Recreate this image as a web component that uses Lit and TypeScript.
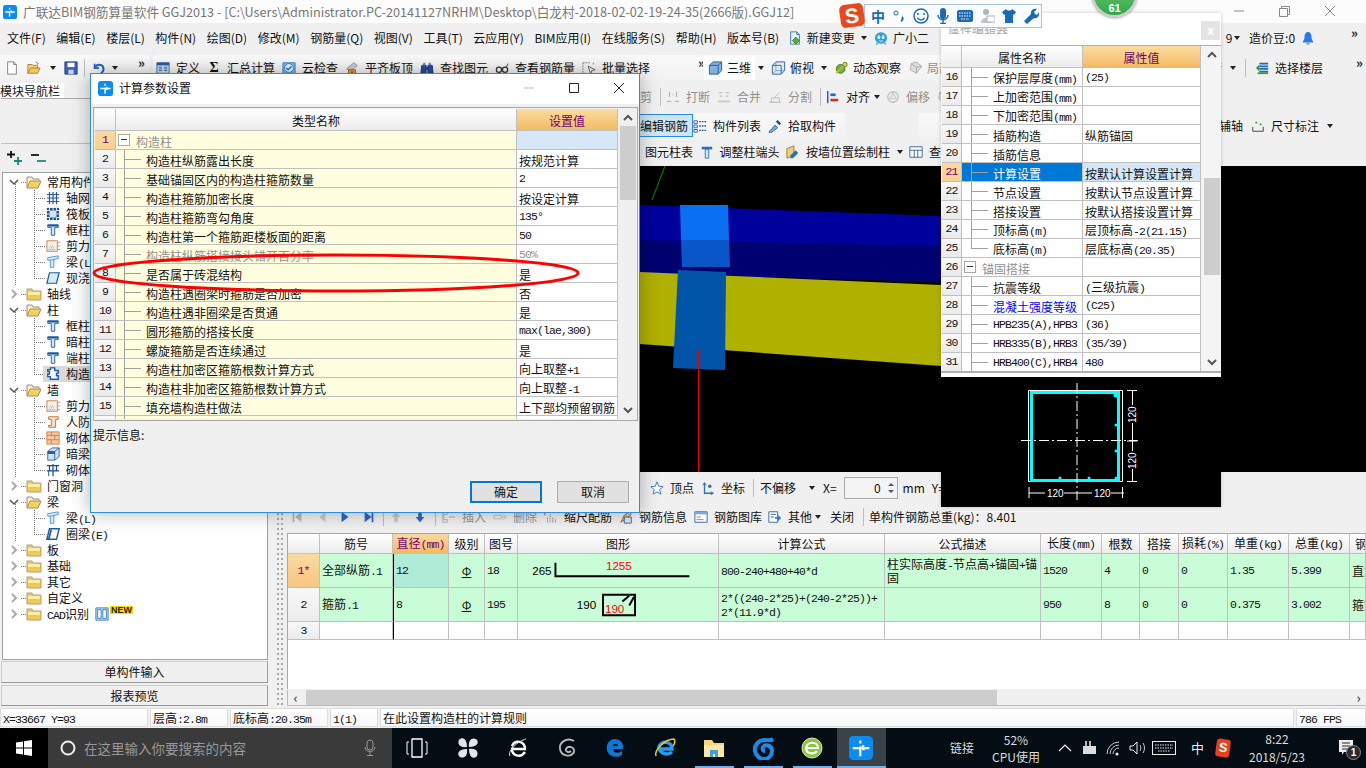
import { LitElement, html, css, svg } from 'lit'
import { customElement } from 'lit/decorators.js'

// split latin runs out so they get the narrow half-width look of the app's table font
const T = (s: string) =>
  html`<span class="tx ${/^[\x20-\x7e°]+$/.test(s) ? 'solo' : ''}">${s
    .split(/([\x20-\x7e°]+)/)
    .map((p, i) => (i % 2 ? html`<span class="l">${p}</span>` : p))}</span>`

const ICONS: Record<string, any> = {
  doc: svg`<path d="M3 1h7l3 3v11H3z" fill="#fff" stroke="#777"/><path d="M10 1v3h3" fill="#ddd" stroke="#777"/>`,
  open: svg`<path d="M1 14V4h5l1 1h5v3" fill="#f3d27a" stroke="#a07a30"/><path d="M1 14l3-6h11l-3 6z" fill="#f7c95a" stroke="#a07a30"/><path d="M10 1l3 2-1 1" fill="none" stroke="#2a6fc0"/>`,
  save: svg`<path d="M1 1h14v14H1z" fill="#3a5fc0" stroke="#223a80"/><path d="M4 2h8v5H4z" fill="#fff"/><path d="M5 10h6v5H5z" fill="#c8d4ee"/>`,
  undo: svg`<path d="M3 3v5h5" fill="none" stroke="#2a66c8" stroke-width="2"/><path d="M3 8c2-5 9-5 10 0 .5 3-1 5-3 6" fill="none" stroke="#2a66c8" stroke-width="2.4"/>`,
  def: svg`<path d="M1 2h14v12H1z" fill="#dbe7f6" stroke="#2a5a9c"/><path d="M1 2h14v3H1z" fill="#2a5a9c"/><path d="M3 7h4M3 9h4M3 11h4M9 7h4M9 9h4M9 11h4" stroke="#2a5a9c"/>`,
  check: svg`<path d="M1 2h14v12H1z" fill="#7fb5ea" stroke="#3a7fc8"/><circle cx="8" cy="8" r="5" fill="#eaf4ff" stroke="#3a7fc8"/><path d="M5 8l2 2 4-4" fill="none" stroke="#2a6fc0" stroke-width="1.5"/>`,
  slab: svg`<path d="M2 9l8-7 4 3-8 7z" fill="#c9cdd4" stroke="#8a8f98"/><path d="M4 10h8v5H4z" fill="#e8a040" stroke="#a85a10"/><path d="M7 12h2v3H7z" fill="#b83010"/>`,
  find: svg`<path d="M2 5h5v9H1zM9 5h5l1 9H9z" fill="#2a4a9c" stroke="#18306c"/><path d="M4 2h2v3H3zM10 2h2l1 3h-3z" fill="#5a7ac8"/><path d="M7 7h2v3H7z" fill="#18306c"/>`,
  glass: svg`<circle cx="4.5" cy="10" r="3" fill="none" stroke="#333" stroke-width="1.4"/><circle cx="11.5" cy="10" r="3" fill="none" stroke="#333" stroke-width="1.4"/><path d="M7 9c1-1 1-1 2 0M13 7l2-4" fill="none" stroke="#333"/>`,
  batch: svg`<path d="M1 2h8M1 2v12M13 2v3M1 14h4" stroke="#777" stroke-dasharray="2 1" fill="none"/><path d="M7 6l8 4-4 1-1 4z" fill="#fff" stroke="#555"/>`,
  cube: svg`<path d="M1 5l4-4h10v10l-4 4H1z" fill="#7fb2de" stroke="#245a8c"/><path d="M1 5h10v10M11 5l4-4" fill="none" stroke="#245a8c"/>`,
  top: svg`<path d="M1 5l4-4h10v10l-4 4H1z" fill="#dcebf8" stroke="#245a8c"/><path d="M5 1v10h10M5 11l-4 4" fill="none" stroke="#7a9ec0"/><path d="M1 5h10v10" fill="none" stroke="#245a8c"/>`,
  orbit: svg`<circle cx="7" cy="9" r="5" fill="#6cb33f" stroke="#3a7a20"/><path d="M2 14L14 2" stroke="#e0b030" stroke-width="2"/><circle cx="12" cy="4" r="2.5" fill="#c8d840" stroke="#6a8020"/>`,
  gcube: svg`<path d="M3 3l6-2 6 5-6 8-7-4z" fill="#ddd" stroke="#aaa"/><path d="M3 3l6 4 6-1M9 7v7" fill="none" stroke="#aaa"/>`,
  floors: svg`<path d="M5 3h10M5 6h10M5 9h10M5 12h10" stroke="#1a6ac0" stroke-width="2"/><path d="M1 8l4-4v8z" fill="#3a9a3a"/><path d="M3 14h12" stroke="#3a9a3a" stroke-width="2"/>`,
  change: svg`<path d="M3 1h7l3 3v11H3z" fill="#eaf3fb" stroke="#2a6fc0"/><path d="M10 1v3h3" fill="none" stroke="#2a6fc0"/><path d="M9 7l4 4-4 4-4-4z" fill="#5ab030" stroke="#3a7a20"/>`,
  mascot: svg`<ellipse cx="8" cy="8" rx="7" ry="6.5" fill="#2aa0ea"/><ellipse cx="5.5" cy="7" rx="1.6" ry="2.2" fill="#fff"/><ellipse cx="10.5" cy="7" rx="1.6" ry="2.2" fill="#fff"/><path d="M3 13l-1 3 3-1.5M13 13l1 3-3-1.5" fill="#2aa0ea"/><path d="M6 11c1 1 3 1 4 0" stroke="#fff" fill="none"/>`,
  bell: svg`<path d="M8 1c3 0 4 3 4 6 0 3 2 4 2 6H2c0-2 2-3 2-6 0-3 1-6 4-6z" fill="#2a7ae8"/><path d="M6 14c0 2 4 2 4 0" fill="#2a7ae8"/>`,
  break: svg`<path d="M4 2v6M12 2v6M1 13h5M10 13h5" stroke="#b8b8b8" stroke-width="1.5"/><path d="M7 5h2" stroke="#ccc"/>`,
  merge: svg`<path d="M2 3h4M10 3h4M3 7h3M10 7h3" stroke="#c0c0c0" stroke-width="1.5"/><path d="M1 12h14v2H1z" fill="#c8c8c8"/>`,
  split: svg`<path d="M1 14h14M2 14l11-11" stroke="#bbb" fill="none"/><path d="M4 9h9v5H4z" fill="#eee" stroke="#bbb"/>`,
  align: svg`<path d="M2 1v14" stroke="#1a4a90" stroke-width="1.5"/><path d="M5 4h6v3H5z" fill="#1a6ac0"/><path d="M5 10h9v3H5z" fill="#d03020"/>`,
  offset: svg`<circle cx="8" cy="8" r="6" fill="none" stroke="#c0c0c0" stroke-width="1.5"/><path d="M8 3l4 7H4z" fill="#e8e8e8" stroke="#c0c0c0"/>`,
  list: svg`<path d="M1 2h4v3H1zM1 7h4v3H1zM1 12h4v3H1z" fill="none" stroke="#2a5a9c"/><path d="M7 3h8M7 8h8M7 13h8" stroke="#2a5a9c" stroke-width="1.5" stroke-dasharray="2 1"/>`,
  pick: svg`<path d="M1 15l7-8 3 3-8 6z" fill="#7aa8d8" stroke="#2a5a9c"/><path d="M9 3l4 4 2-2-4-4z" fill="#1a4a90"/>`,
  dim: svg`<path d="M2 9v5h12V9" fill="none" stroke="#333"/><path d="M5 3h2v2H5zM10 5h2v2h-2z" fill="#3a9a3a"/>`,
  colend: svg`<path d="M2 2h12v3H2z" fill="#2a6fc0"/><path d="M6 5h4v10H6z" fill="#cfe4fa" stroke="#2a6fc0"/>`,
  wallcol: svg`<path d="M1 15V4l8-3v11z" fill="#e8d080" stroke="#a07a30"/><path d="M11 6l3 3-6 6H5v-3z" fill="#2a6fc0"/>`,
  tbl: svg`<path d="M1 2h14v12H1z" fill="#fff" stroke="#2a5a9c"/><path d="M1 6h14M6 6v8M10 6v8" stroke="#2a5a9c"/>`,
  star: svg`<path d="M8 1l2 5 5 .5-4 3.5 1.500 5L8 12.500 3.500 15 5 10 1 6.500 6 6z" fill="#fff" stroke="#2a6fc0"/>`,
  coord: svg`<path d="M4 2v12h10" fill="none" stroke="#2a6fc0" stroke-width="1.5"/><path d="M2 5l2-3 2 3M11 12l3 2-3 2" fill="none" stroke="#2a6fc0"/><circle cx="10" cy="6" r="2" fill="#2a6fc0"/>`,
  first: svg`<path d="M3 2h2v12H3zM13 2L6 8l7 6z" fill="#b8b8b8"/>`,
  prev: svg`<path d="M12 2L5 8l7 6z" fill="#c8c8c8"/>`,
  next: svg`<path d="M4 2l8 6-8 6z" fill="#2a66c8"/>`,
  last: svg`<path d="M3 2l8 6-8 6zM11 2h2v12h-2z" fill="#2a66c8"/>`,
  up: svg`<path d="M8 2l5 6h-3v6H6V8H3z" fill="#c8c8c8"/>`,
  down: svg`<path d="M8 14l5-6h-3V2H6v6H3z" fill="#2a66c8"/>`,
  ins: svg`<path d="M1 2h5v3H2v6h4v3H1z" fill="none" stroke="#b0b0b0"/><path d="M8 7h7v2H8z" fill="#c8c8c8"/>`,
  del: svg`<path d="M1 6h9v4H1z" fill="none" stroke="#c0c0c0"/><path d="M10 8h5M12 5l3 3-3 3" fill="none" stroke="#c0c0c0"/>`,
  scale: svg`<path d="M1 1h5M1 1v5" stroke="#d03020" fill="none"/><path d="M4 14V8M7 14V5M10 14V9M13 14V11" stroke="#555" stroke-dasharray="1 1"/>`,
  info: svg`<path d="M2 14l4-8 6-4 2 3-6 5z" fill="#e8c878" stroke="#8a6a30"/><path d="M6 8h8v7H6z" fill="#dbe7f6" stroke="#2a5a9c"/>`,
  lib: svg`<path d="M1 2h14v12H1z" fill="#fff" stroke="#2a5a9c"/><path d="M1 2h14v3H1z" fill="#7aa8d8"/><path d="M3 8h5M3 11h8" stroke="#a07a30"/>`,
  other: svg`<path d="M1 2h10v12H1z" fill="#fff" stroke="#2a5a9c"/><path d="M3 5h6M3 8h4" stroke="#2a5a9c"/><path d="M8 8h3V5l4 4-4 4v-3H8z" fill="#2a7ae8"/>`,
  // tree icons
  grid: svg`<path d="M1 4h14M1 8h14M1 12h14M4 1v14M8 1v14M12 1v14" stroke="#2a5a9c" stroke-width="1.4"/>`,
  raft: svg`<path d="M1 1h14v14H1z" fill="#24508c"/><path d="M4 4h8v8H4z" fill="#cfe4fa"/><path d="M1 4h3M1 8h3M1 12h3M12 4h3M12 8h3M12 12h3M4 1v3M8 1v3M12 1v3M4 12v3M8 12v3M12 12v3" stroke="#fff"/>`,
  col: svg`<path d="M2 2h12v3h-4v9H6V5H2z" fill="#cfe4fa" stroke="#1a5aa8"/><path d="M2 2h12v2H2z" fill="#1a5aa8"/>`,
  shear: svg`<path d="M1 2h12v12H1z" fill="#f2eeea" stroke="#c87a40"/><path d="M3 12h8M4 10h6M5 8h4" stroke="#999" stroke-dasharray="1 1"/><path d="M14 4h2M14 8h2M14 12h2" stroke="#c87a40"/>`,
  beam: svg`<path d="M2 3l12-2v3l-5 1v9H5V6L2 6z" fill="#d7ecfa" stroke="#4a90c8"/><path d="M5 6l4-1" stroke="#4a90c8"/>`,
  plate: svg`<path d="M4 2h11l-3 12H1z" fill="#d7ecfa" stroke="#1a5aa8" stroke-width="1.4"/>`,
  gz: svg`<path d="M5 1h5v3h4v3h-2v3h2v4H5v-3H2V8h2V5H2V3h3z" fill="#fff" stroke="#1a5aa8" stroke-width="1.6"/>`,
  rf: svg`<path d="M3 2h11v3h-3v9H3v-2h3V5H3z" fill="#f8dfc8" stroke="#c06a30"/>`,
  brick: svg`<path d="M1 1h14v14H1z" fill="#f8c8a0" stroke="#d07a40"/><path d="M1 5h14M1 10h14M6 1v4M10 5v5M6 10v5" stroke="#d07a40"/>`,
  dbeam: svg`<path d="M2 5l5-4h8v10l-5 4H2z" fill="#cfe4fa" stroke="#2a5a9c"/><path d="M2 5h8v10M10 5l5-4" fill="none" stroke="#2a5a9c"/><path d="M2 5h8v3H2z" fill="#2a5a9c"/>`,
  tie: svg`<path d="M1 3h14M1 9h14M8 1v14M4 3v6M12 3v6" stroke="#1a4aa0" stroke-width="1.4" fill="none"/><path d="M3 9v6" stroke="#1a4aa0"/>`,
  circ: svg`<path d="M4 2h11l-3 12H1z" fill="#fff" stroke="#1a5aa8" stroke-width="1.6"/><path d="M3 14l3-11" stroke="#1a5aa8" stroke-width="2"/>`,
  logo: svg`<rect x="0" y="0" width="16" height="16" rx="3" fill="#0d8cf0"/><path d="M7.500 3v2M7.500 7v6.500M2.500 8h5c1.500 0 2 0 2-2M9.500 9.500c0-1 .5-1.500 1.500-1.500h2.500" fill="none" stroke="#fff" stroke-width="1.500"/>`,
}
const I = (n: string) => html`<svg class="i" viewBox="0 0 16 16">${ICONS[n]}</svg>`

const FOLDER = html`<svg class="fd" viewBox="0 0 16 14"><path d="M1 13V2h5l1 2h8v9z" fill="#f5c94f" stroke="#b8a070"/><path d="M2 5h12v3H2z" fill="#fdeeb0"/></svg>`
const FOLDER_OPEN = html`<svg class="fd" viewBox="0 0 16 14"><path d="M1 13V2h5l1 2h6v2" fill="#f8f0d0" stroke="#a89060"/><path d="M1 13l3-7h11l-3 7z" fill="#f7cf62" stroke="#a89060"/></svg>`
const CHEV_O = html`<svg class="ch" viewBox="0 0 10 10"><path d="M1 3l4 4 4-4" fill="none" stroke="#555" stroke-width="1.5"/></svg>`
const CHEV_C = html`<svg class="ch" viewBox="0 0 10 10"><path d="M3 1l4 4-4 4" fill="none" stroke="#a8a8a8" stroke-width="1.8"/></svg>`
const UP = html`<svg viewBox="0 0 10 7"><path d="M1 6l4-4 4 4" fill="none" stroke="#555" stroke-width="2"/></svg>`
const DOWN = html`<svg class="end" viewBox="0 0 10 7"><path d="M1 1l4 4 4-4" fill="none" stroke="#555" stroke-width="2"/></svg>`

type TreeRow = { t: string; i?: string; open?: boolean; last?: boolean; sel?: boolean; x?: boolean }
const TREE: TreeRow[] = [
  { t: '常用构件类型', open: true },
  { t: '轴网(J)', i: 'grid' },
  { t: '筏板基础(M)', i: 'raft' },
  { t: '框柱(Z)', i: 'col' },
  { t: '剪力墙(Q)', i: 'shear' },
  { t: '梁(L)', i: 'beam' },
  { t: '现浇板(B)', i: 'plate', last: true },
  { t: '轴线' },
  { t: '柱', open: true },
  { t: '框柱(Z)', i: 'col' },
  { t: '暗柱(Z)', i: 'col' },
  { t: '端柱(Z)', i: 'col' },
  { t: '构造柱(Z)', i: 'gz', last: true, sel: true },
  { t: '墙', open: true },
  { t: '剪力墙(Q)', i: 'shear' },
  { t: '人防门框墙(RF)', i: 'rf' },
  { t: '砌体墙(Q)', i: 'brick' },
  { t: '暗梁(A)', i: 'dbeam' },
  { t: '砌体加筋(Y)', i: 'tie', last: true },
  { t: '门窗洞' },
  { t: '梁', open: true },
  { t: '梁(L)', i: 'beam' },
  { t: '圈梁(E)', i: 'circ', last: true },
  { t: '板' },
  { t: '基础' },
  { t: '其它' },
  { t: '自定义' },
  { t: 'CAD识别', x: true },
]

const DLG_ROWS: [string, string, boolean?][] = [
  ['构造柱纵筋露出长度', '按规范计算'],
  ['基础锚固区内的构造柱箍筋数量', '2'],
  ['构造柱箍筋加密长度', '按设定计算'],
  ['构造柱箍筋弯勾角度', '135°'],
  ['构造柱第一个箍筋距楼板面的距离', '50'],
  ['构造柱纵筋搭接接头错开百分率', '50%', true],
  ['是否属于砖混结构', '是'],
  ['构造柱遇圈梁时箍筋是否加密', '否'],
  ['构造柱遇非圈梁是否贯通', '是'],
  ['圆形箍筋的搭接长度', 'max(lae,300)'],
  ['螺旋箍筋是否连续通过', '是'],
  ['构造柱加密区箍筋根数计算方式', '向上取整+1'],
  ['构造柱非加密区箍筋根数计算方式', '向上取整-1'],
  ['填充墙构造柱做法', '上下部均预留钢筋'],
]

const PROP_ROWS: [number, string, string, string?][] = [
  [16, '保护层厚度(mm)', '(25)'],
  [17, '上加密范围(mm)', ''],
  [18, '下加密范围(mm)', ''],
  [19, '插筋构造', '纵筋锚固'],
  [20, '插筋信息', ''],
  [21, '计算设置', '按默认计算设置计算', 'sel'],
  [22, '节点设置', '按默认节点设置计算'],
  [23, '搭接设置', '按默认搭接设置计算'],
  [24, '顶标高(m)', '层顶标高-2(21.15)'],
  [25, '底标高(m)', '层底标高(20.35)', 'end'],
  [26, '锚固搭接', '', 'group'],
  [27, '抗震等级', '(三级抗震)'],
  [28, '混凝土强度等级', '(C25)', 'blue'],
  [29, 'HPB235(A),HPB3', '(36)'],
  [30, 'HRB335(B),HRB3', '(35/39)'],
  [31, 'HRB400(C),HRB4', '480'],
]

const MENU = ['文件(F)', '编辑(E)', '楼层(L)', '构件(N)', '绘图(D)', '修改(M)', '钢筋量(Q)', '视图(V)', '工具(T)', '云应用(Y)', 'BIM应用(I)', '在线服务(S)', '帮助(H)', '版本号(B)']

type Item = { i?: string; t?: string; dim?: boolean; dd?: boolean; sep?: boolean; gap?: number; more?: boolean; glyph?: string; wh?: boolean }
const renderItems = (items: Item[]) =>
  items.map((it) => {
    if (it.sep) return html`<span class="sep"></span>`
    if (it.gap) return html`<span style="width:${it.gap}px;flex:none"></span>`
    if (it.more) return html`<span class="more">»</span>`
    if (it.dd && !it.t && !it.i) return html`<span class="dd"></span>`
    return html`<span class="it ${it.dim ? 'dim' : ''} ${it.wh ? 'wh' : ''}">${it.glyph ? html`<span class="glyph">${it.glyph}</span>` : ''}${it.i ? I(it.i) : ''}${it.t ? html`<span>${it.t}</span>` : ''}</span>${it.dd ? html`<span class="dd"></span>` : ''}`
  })

const R1A: Item[] = [{ gap: 5 }, { i: 'doc' }, { gap: 8 }, { i: 'open' }, { gap: 9 }, { dd: true }, { gap: 8 }, { i: 'save' }, { gap: 6 }, { sep: true }, { gap: 7 }, { i: 'undo' }, { gap: 6 }, { dd: true }, { gap: 20 }, { more: true }]
const R1B: Item[] = [{ i: 'def', t: '定义' }, { glyph: 'Σ', t: '汇总计算' }, { i: 'check', t: '云检查' }, { i: 'slab', t: '平齐板顶' }, { i: 'find', t: '查找图元' }, { i: 'glass', t: '查看钢筋量' }, { i: 'batch', t: '批量选择' }, { gap: 34 }, { more: true }]
const R1C: Item[] = [{ i: 'cube', t: '三维', dd: true, wh: true }, { i: 'top', t: '俯视', dd: true }, { i: 'orbit', t: '动态观察' }, { i: 'gcube', t: '局部三维', dim: true }]
const R1D: Item[] = [{ t: '转', dd: true }, { sep: true }, { i: 'floors', t: '选择楼层' }, { gap: 17 }, { more: true }]
const R2: Item[] = [{ t: '剪', dim: true }, { sep: true }, { i: 'break', t: '打断', dim: true }, { i: 'merge', t: '合并', dim: true }, { i: 'split', t: '分割', dim: true }, { sep: true }, { i: 'align', t: '对齐', dd: true }, { i: 'offset', t: '偏移', dim: true }, { i: 'gcube' }]
const R3A: Item[] = [{ i: 'list', t: '构件列表' }, { i: 'pick', t: '拾取构件' }]
const R3B: Item[] = [{ t: '辅轴' }, { i: 'dim', t: '尺寸标注', dd: true }]
const R4: Item[] = [{ t: '图元柱表' }, { i: 'colend', t: '调整柱端头' }, { i: 'wallcol', t: '按墙位置绘制柱', dd: true }, { i: 'tbl', t: '查改标注' }]
const R5: Item[] = [{ i: 'star', t: '顶点' }, { i: 'coord', t: '坐标' }, { sep: true }]
const R6: Item[] = [
  { i: 'first' }, { gap: 11 }, { i: 'prev' }, { gap: 9 }, { i: 'next' }, { gap: 10 }, { i: 'last' }, { gap: 7 }, { sep: true }, { gap: 5 },
  { i: 'up' }, { gap: 10 }, { i: 'down' }, { gap: 8 }, { sep: true }, { gap: 6 },
  { i: 'ins', t: '插入', dim: true }, { gap: 7 }, { i: 'del', t: '删除', dim: true }, { gap: 7 }, { i: 'scale', t: '缩尺配筋' }, { gap: 7 },
  { i: 'info', t: '钢筋信息' }, { gap: 7 }, { i: 'lib', t: '钢筋图库' }, { gap: 6 }, { i: 'other', t: '其他' }, { gap: 3 }, { dd: true }, { gap: 9 },
  { t: '关闭' }, { gap: 9 }, { sep: true }, { gap: 5 }, { t: '单构件钢筋总重(kg)：8.401' },
]

const BAR_COLS = ['筋号', '直径(mm)', '级别', '图号', '图形', '计算公式', '公式描述', '长度(mm)', '根数', '搭接', '损耗(%)', '单重(kg)', '总重(kg)', '钢筋归类']

const FIG1 = html`<svg class="fig" viewBox="518 554 201 34">
  <text x="528" y="576" class="ft">265</text>
  <path d="M552 563v14h138" fill="none" stroke="#000" stroke-width="2"/>
  <text x="604" y="570" class="ft" fill="#f00">1255</text>
</svg>`
const FIG2 = html`<svg class="fig" viewBox="518 588 201 34">
  <text x="574" y="610" class="ft">190</text>
  <path d="M601 595h33v21h-33z" fill="none" stroke="#000" stroke-width="2"/>
  <path d="M621 602l7-6M628 606l5-9" fill="none" stroke="#000" stroke-width="2"/>
  <text x="603" y="614" class="ft" fill="#f00">190</text>
</svg>`

@customElement('app-root')
export class AppRoot extends LitElement {
  static styles = css`
    :host {
      display: block;
      position: relative;
      width: 1366px;
      height: 768px;
      overflow: hidden;
      background: #f0f0f0;
      color: #111;
      font: 12px/16px "Noto Sans CJK SC", "Noto Sans", sans-serif;
    }
    * { box-sizing: border-box; }
    .l { font: 11.5px/12px "Liberation Mono", monospace; letter-spacing: -0.9px; }
    svg { display: block; flex: none; }
    .i { width: 14px; height: 14px; }
    .app { display: flex; flex-direction: column; height: 768px; }

    .title { height: 23px; background: #fcfcfc; display: flex; align-items: center; padding-left: 3px; color: #777; white-space: nowrap; }
    .title .lg { width: 14px; height: 14px; margin-right: 6px; }
    .title .txt { flex: 1; font-size: 12.65px; }
    .winbtn { display: flex; width: 130px; padding-left: 8px; gap: 35px; flex: none; margin-right: 10px; }
    .menu { height: 30px; display: flex; align-items: center; padding-left: 7px; gap: 10.6px; white-space: nowrap; background: #f0f0f0; }
    .menu .it { gap: 5px; }
    .menu .chg { margin-left: -2px; }
    .menu .dd, .menu .mas { margin-left: -4px; }
    .menu .right { margin-left: auto; display: flex; align-items: center; gap: 6px; padding-right: 8px; }

    .row { display: flex; align-items: center; white-space: nowrap; flex: none; }
    .seg { display: flex; align-items: center; gap: 7px; height: 100%; flex: none; background: linear-gradient(#f9f9f9, #f2f2f2); border-radius: 3px; }
    .it { display: inline-flex; align-items: center; gap: 6px; flex: none; }
    .it.dim { color: #909090; }
    .it.wh { background: #fff; box-shadow: 0 0 0 4px #fff; }
    .glyph { width: 14px; text-align: center; font: 700 14px/14px "Liberation Serif", serif; }
    .dd { width: 0; height: 0; border: 3px solid transparent; border-top: 4px solid #222; border-bottom: 0; flex: none; }
    .sep { width: 1px; height: 18px; background: #bcbcbc; margin: 0 1px; flex: none; }
    .more { font-size: 13px; font-weight: 700; color: #222; flex: none; margin-bottom: 10px; }
    .r1 { height: 30px; padding: 2px 0; }
    .s1a { width: 150px; margin-right: 3px; gap: 0; }
    .s1a .sep { margin: 0; }
    .s1b { width: 550px; padding-left: 3px; }
    .s1c { width: 300px; padding-left: 5px; }
    .s1c .it { gap: 4px; }
    .s1c .i { width: 15px; }
    .s1d { width: 363px; justify-content: flex-end; background: none; gap: 8px; padding-right: 3px; }

    .body { flex: 1; display: flex; min-height: 0; }
    .left { width: 269px; flex: none; display: flex; flex-direction: column; padding: 0 1px; }
    .cap { height: 15px; line-height: 15px; background: #fff; margin-left: -1px; width: 64px; }
    .navhead { height: 46px; border-top: 1px solid #aaa; border-bottom: 1px solid #c0c0c0; background: #f0f0f0; }
    .plus { height: 28px; display: flex; align-items: center; padding-left: 6px; }
    .plus svg { width: 42px; height: 16px; }
    .tree { height: 488px; margin-left: 1px; border: 1px solid #a0a0a0; background: #fff; padding-top: 1px; overflow: hidden; }
    .tr { height: 16px; display: flex; align-items: center; white-space: nowrap; --dv: repeating-linear-gradient(to bottom, #777 0 1px, transparent 1px 2px); --dh: repeating-linear-gradient(to right, #777 0 1px, transparent 1px 2px); background-repeat: no-repeat; }
    .tr.c0 { padding-left: 6px; background-image: var(--dh); background-size: 5px 1px; background-position: 18px 8px; }
    .tr.c0.on { background-image: var(--dh), var(--dv); background-size: 5px 1px, 1px 8px; background-position: 18px 8px, 12px 8px; }
    .tr.c1 { padding-left: 43px; background-image: var(--dv), var(--dv), var(--dh); background-size: 1px 16px, 1px 16px, 12px 1px; background-position: 12px 0, 31px 0, 31px 8px; }
    .tr.c1.last { background-size: 1px 16px, 1px 8px, 12px 1px; }
    .ch { width: 10px; height: 10px; margin-right: 7px; }
    .fd { width: 16px; height: 14px; margin-right: 5px; }
    .tr.c1 .i { margin-right: 6px; }
    .tr .name { line-height: 16px; }
    .selbg { background: #d9d9d9; display: flex; align-items: center; flex: 1; margin-left: -3px; padding-left: 3px; height: 16px; }
    .new { font: 700 9px/8px "Liberation Sans", sans-serif; background: #ffd800; color: #222; padding: 0 1px; margin: -8px 0 0 1px; }
    .cadi { margin-left: 6px; }
    .navbtn { height: 21px; margin-top: 2px; line-height: 19px; text-align: center; background: #f0f0f0; border: 1px solid #ccc; border-bottom-color: #999; border-right-color: #999; }
    .navbtn.first { margin-top: 1px; height: 22px; line-height: 20px; }

    .right-col { flex: 1; display: flex; flex-direction: column; min-width: 0; }
    .tb { height: 28px; padding-left: 371px; gap: 7px; background: #f0f0f0; }
    .tb .sep { margin: 0 -2px 0 1px; }
    .tb .dd { margin: 0 -1px 0 -3px; }
    .tb3 { height: 27px; padding: 2px 0 0 359px; gap: 0; }
    .cur { height: 23px; padding: 0 4px 0 11px; background: #cde6f7; border: 1px solid #2a8ce0; display: flex; align-items: center; flex: none; }
    .seg3a { padding-left: 0; gap: 7px; width: 152px; }
    .seg3b { width: 340px; margin-left: 74px; background: linear-gradient(#f9f9f9, #f2f2f2); height: 100%; border-radius: 3px; }
    .seg3c { margin-left: auto; display: flex; align-items: center; gap: 8px; padding-right: 33px; }
    .tb4 { height: 28px; padding-left: 376px; gap: 6.5px; }
    .canvas { height: 306px; background: #000; flex: none; }
    .canvas svg { width: 1097px; height: 306px; }
    .bar { height: 31px; padding-left: 381px; gap: 7px; }
    .bar .sep { margin-right: -1px; }
    .input { width: 54px; height: 22px; margin-right: -2px; border: 1px solid #a8a8a8; background: #f4f4f4; display: flex; align-items: center; justify-content: flex-end; padding-right: 2px; gap: 6px; flex: none; }
    .input svg { width: 8px; height: 14px; }

    .bottom { flex: 1; display: flex; min-height: 0; }
    .grip { width: 18px; flex: none; background-color: #f0f0f0; background-image: repeating-linear-gradient(to bottom, #aaa 0 2px, transparent 2px 5px), repeating-linear-gradient(to bottom, #aaa 0 2px, transparent 2px 5px); background-size: 2px 100%; background-position: 8px 10px, 12px 10px; background-repeat: no-repeat; }
    .panel { flex: 1; display: flex; flex-direction: column; min-width: 0; }
    .rebar { height: 30px; padding: 0 0 2px 3px; }
    .rebar .sep { margin: 0; }
    .grid { display: grid; grid-template-columns: 32px 73px 56px 36px 33px 201px 166px 156px 61px 38px 39px 49px 61px 61px 16px; grid-template-rows: 20px 34px 34px 18px; height: 156px; background: #fff; border-left: 1px solid #a8a8a8; border-top: 1px solid #a8a8a8; overflow: hidden; align-content: start; }
    .g { border-right: 1px solid #c0c0c0; border-bottom: 1px solid #c0c0c0; display: flex; align-items: center; padding-left: 2px; overflow: hidden; line-height: 12px; white-space: nowrap; }
    .g.h { background: linear-gradient(#fff, #ececec); justify-content: center; padding: 0; }
    .g.hsel { background: linear-gradient(#fadb9e, #f2bb62); color: #700070; }
    .g.n { background: linear-gradient(#f8f8f8, #ececec); justify-content: center; padding: 0; }
    .g.no { background: linear-gradient(#fdd9a0, #f6c680); color: #700070; }
    .g.gr { background: #c9fdd7; }
    .g.dia { background: #aeecd8; }
    .g.wrap { white-space: normal; word-break: break-all; }
    .g.ctr { justify-content: center; padding: 0; }
    .g.black { border-left: 1px solid #000; }
    .g.clip { justify-content: flex-start; padding-left: 5px; }
    .fig { width: 200px; height: 33px; }
    .ft { font: 12px "Liberation Sans", sans-serif; }
    .hscroll { flex: none; height: 16px; display: flex; align-items: center; background: #f0f0f0; border: 1px solid #bbb; border-width: 0 0 1px 1px; margin-top: 1px; }
    .hscroll .th { width: 691px; height: 15px; background: #cdcdcd; margin-left: 3px; }
    .hscroll .arr { font-size: 13px; line-height: 15px; width: 15px; text-align: center; color: #555; flex: none; font-weight: 700; }
    .hscroll .sp { flex: 1; }

    .status { height: 20px; display: flex; gap: 2px; flex: none; background: #f0f0f0; padding-bottom: 1px; }
    .status div { border: 1px solid #dcdcdc; background: linear-gradient(#fff, #f6f6f6); line-height: 17px; padding-left: 2px; white-space: nowrap; overflow: hidden; flex: none; }
    .taskbar { height: 40px; background: #040d13; display: flex; align-items: center; flex: none; color: #eee; white-space: nowrap; }
    .start { width: 48px; height: 40px; background: #000; display: flex; align-items: center; justify-content: center; flex: none; }
    .start svg { width: 16px; height: 16px; }
    .search { width: 344px; height: 40px; background: #3a3a3a; display: flex; align-items: center; padding: 0 14px 0 12px; flex: none; color: #999; font-size: 13.5px; gap: 8px; }
    .search svg { width: 16px; height: 16px; }
    .search .mic { margin-left: auto; width: 16px; height: 18px; }
    .tk { width: 49px; height: 40px; display: flex; align-items: center; justify-content: center; flex: none; position: relative; }
    .tk svg { width: 24px; height: 24px; }
    .tk.first { width: 49.5px; }
    .tk.pin { width: 52px; }
    .tk.run::after { content: ""; position: absolute; left: 5px; right: 5px; bottom: 0; height: 2px; background: #6cb0f0; }
    .tk.act { background: #3a4348; }
    .tk.act::after { left: 0; right: 0; }
    .tray { margin-left: auto; display: flex; align-items: center; height: 40px; }
    .link { margin-right: 17px; font-size: 12px; color: #ddd; }
    .cpu { width: 50px; text-align: center; line-height: 17px; margin-right: 15px; color: #ddd; font-size: 12px; }
    .tray svg { width: 18px; height: 18px; margin-right: 6px; }
    .tray .kb { width: 24px; height: 16px; }
    .zh { font-size: 13px; margin: 0 12px 0 9px; }
    .sg { width: 14px; height: 18px; background: #e8401c; border-radius: 3px; color: #fff; font: 700 13px/18px "Liberation Sans", sans-serif; text-align: center; transform: rotate(8deg); margin-right: 17px; }
    .clock { width: 60px; text-align: center; line-height: 18px; margin-right: 19px; color: #ddd; }
    .note { position: relative; width: 40px; display: flex; justify-content: center; }
    .note svg { margin: 0; width: 18px; height: 18px; }
    .badge { position: absolute; left: 20px; top: 6px; width: 15px; height: 15px; border-radius: 50%; background: #2b2b2b; border: 1px solid #888; font: 700 10px/13px "Liberation Sans", sans-serif; text-align: center; color: #fff; }

    /* windows floating over the main window */
    .dlg { position: absolute; left: 90px; top: 73px; width: 550px; height: 440px; background: #f0f0f0; border: 1px solid #2b8ee0; box-shadow: 0 0 18px rgba(0, 0, 0, 0.3); display: flex; flex-direction: column; z-index: 2; }
    .dlgt { height: 30px; flex: none; background: #fff; display: flex; align-items: center; padding: 0 0 2px 7px; }
    .dlgt .lg { width: 15px; height: 15px; margin-right: 6px; }
    .dlgt .sp { flex: 1; }
    .dlgbtns { display: flex; margin-right: 15px; gap: 35px; align-items: center; }
    .dlgbtns svg { width: 10px; height: 10px; }
    .frame { margin: 3px 0 0 2px; width: 545px; height: 314px; border: 1px solid #a8a8a8; padding: 1px; display: flex; flex: none; background: #f0f0f0; gap: 2px; overflow: hidden; }
    .dgrid { width: 523px; display: grid; grid-template-columns: 21px 401px 101px; grid-auto-rows: 19px; grid-template-rows: 22px; overflow: hidden; flex: none; background: #fff; }
    .dc { border-right: 1px solid #c0c0c0; border-bottom: 1px solid #c0c0c0; display: flex; align-items: center; overflow: hidden; white-space: nowrap; line-height: 12px; padding-top: 4px; }
    .dc:not(.n) .solo { position: relative; top: -2px; }
    .dc.h { background: linear-gradient(#fff, #ececec); justify-content: center; padding-top: 2px; }
    .dc.hsel { background: linear-gradient(#fbdca0, #f2bb62); color: #700070; }
    .dc.n { background: linear-gradient(#f8f8f8, #eaeaea); justify-content: center; padding-top: 0; }
    .dc.no { background: linear-gradient(#fdd9a0, #f8cf8e); color: #700070; }
    .dc.y { background: #ffffe0; }
    .dc.v { padding-left: 2px; background: #fff; }
    .dc.pick { background: #d6e8f7; }
    .dc.gray { color: #909090; }
    .br { width: 29px; height: 18px; flex: none; margin: -4px 1px 0 0; align-self: flex-start; background-image: linear-gradient(#a0a0a0, #a0a0a0), linear-gradient(#a0a0a0, #a0a0a0); background-repeat: no-repeat; background-size: 1px 18px, 17px 1px; background-position: 8px 0, 8px 9px; }
    .bx { width: 12px; height: 12px; border: 1px solid #a8a8a8; background: #fff; margin: -4px 6px 0 2px; position: relative; flex: none; }
    .bx::after { content: ""; position: absolute; left: 2px; right: 2px; top: 4px; height: 1px; background: #333; }
    .sb { width: 16px; flex: none; display: flex; flex-direction: column; align-items: stretch; }
    .sb svg { width: 10px; height: 7px; margin: 5px auto; }
    .sb .th { background: #cdcdcd; }
    .dlg .sb .th { height: 74px; }
    .sb .end { margin-top: auto; margin-bottom: 5px; }
    .prompt { margin: 6px 0 0 2px; }
    .foot { margin-top: auto; padding: 0 10px 9px 0; display: flex; justify-content: flex-end; gap: 15px; }
    .btn { width: 72px; height: 22px; border: 1px solid #adadad; background: #e1e1e1; text-align: center; line-height: 20px; }
    .btn.ok { border: 2px solid #0078d7; line-height: 18px; }
    .ell { position: absolute; left: 0; top: 0; width: 550px; height: 440px; pointer-events: none; }

    .prop { position: absolute; left: 941px; top: 13px; width: 280px; height: 494px; background: #fff; display: flex; flex-direction: column; box-shadow: 0 0 4px rgba(0, 0, 0, 0.2); z-index: 3; }
    .proph { height: 32px; flex: none; display: flex; }
    .propt { margin: 11px 0 0 7px; height: 10px; overflow: hidden; color: #aaa; line-height: 14px; }
    .close { margin: 8px 1px 0 auto; width: 19px; height: 19px; background: #e4e4e4; color: #fff; text-align: center; line-height: 18px; font-weight: 700; }
    .pframe { height: 328px; flex: none; display: flex; border-top: 1px solid #b0b0b0; border-bottom: 2px solid #b0b0b0; overflow: hidden; padding-left: 1px; gap: 2px; background: #f4f4f4; }
    .pgrid { width: 259px; flex: none; display: grid; grid-template-columns: 20px 121px 118px; grid-template-rows: 22px; grid-auto-rows: 19px; background: #fff; overflow: hidden; }
    .pbr { width: 27px; height: 18px; flex: none; margin: -4px 4px 0 0; align-self: flex-start; background-image: linear-gradient(#a0a0a0, #a0a0a0), linear-gradient(#a0a0a0, #a0a0a0); background-repeat: no-repeat; background-size: 1px 18px, 17px 1px; background-position: 9px 0, 9px 9px; }
    .pbr.end { background-size: 1px 10px, 17px 1px; }
    .dc.p { background: #fff; }
    .dc.psel { background: #0078d7; color: #fff; }
    .dc.pblue { color: #0000ff; }
    .prop .sb { margin-left: 1px; }
    .prop .sb .th { height: 97px; margin-top: 115px; }
    .draw { margin-top: 4px; height: 130px; background: #000; flex: none; }
    .draw svg { width: 280px; height: 130px; }
    .dt { font: 10px "Liberation Sans", sans-serif; fill: #fff; }

    .medal { position: absolute; left: 1092px; top: -28px; width: 45px; height: 45px; border-radius: 50%; background: linear-gradient(#7fd07f, #2fa84a); border: 2px solid #ccc; box-shadow: 0 1px 3px rgba(0, 0, 0, 0.4); z-index: 5; color: #fff; font: 700 11px/14px "Liberation Sans", sans-serif; text-align: center; padding-top: 27px; }
    .ime { position: absolute; left: 840px; top: 0; height: 28px; display: flex; align-items: center; z-index: 4; }
    .slogo { width: 24px; height: 23px; background: #e8481c; border-radius: 5px; color: #fff; font: 700 21px/23px "Liberation Sans", sans-serif; text-align: center; transform: rotate(-8deg); margin-top: 2px; flex: none; }
    .imebar { width: 178px; height: 24px; margin-top: 3px; background: rgba(250, 252, 255, 0.95); border: 1px solid #a8c4dc; display: flex; align-items: center; padding-left: 6px; gap: 6px; color: #1a6ab8; }
    .imebar b { font: 700 14px/16px "Noto Sans CJK SC", sans-serif; }
    .imebar svg { width: 16px; height: 16px; }
  `

  private tree() {
    return TREE.map((r) => {
      if (r.i) {
        const name = html`${I(r.i)}<span class="name">${T(r.t)}</span>`
        return html`<div class="tr c1 ${r.last ? 'last' : ''}">${r.sel ? html`<div class="selbg">${name}</div>` : name}</div>`
      }
      return html`<div class="tr c0 ${r.open ? 'on' : ''}">
        ${r.open ? CHEV_O : CHEV_C}${r.open ? FOLDER_OPEN : FOLDER}<span class="name">${T(r.t)}</span>
        ${r.x ? html`<svg class="i cadi" viewBox="0 0 16 16"><path d="M1 1h14v14H1z" fill="#bfe0fb" stroke="#2a78c8"/><path d="M3 3h4v10H3zM9 3h4v10H9z" fill="#fff" stroke="#2a78c8"/></svg><span class="new">NEW</span>` : ''}
      </div>`
    })
  }

  private dialog() {
    return html`<div class="dlg">
      <div class="dlgt">
        <svg class="lg" viewBox="0 0 16 16">${ICONS.logo}</svg><span>计算参数设置</span><span class="sp"></span>
        <div class="dlgbtns">
          <svg viewBox="0 0 10 10"><path d="M0 5h10" stroke="#bbb"/></svg>
          <svg viewBox="0 0 10 10"><path d="M.5.500h9v9h-9z" fill="none" stroke="#222"/></svg>
          <svg viewBox="0 0 10 10"><path d="M0 0l10 10M10 0L0 10" stroke="#222"/></svg>
        </div>
      </div>
      <div class="frame">
        <div class="dgrid">
          <div class="dc h"></div><div class="dc h">类型名称</div><div class="dc h hsel">设置值</div>
          <div class="dc n no"><span class="l">1</span></div>
          <div class="dc y gray"><span class="bx"></span>构造柱</div>
          <div class="dc v pick"></div>
          ${DLG_ROWS.map(([a, b, gray], i) => html`
            <div class="dc n"><span class="l">${i + 2}</span></div>
            <div class="dc y ${gray ? 'gray' : ''}"><span class="br"></span>${T(a)}</div>
            <div class="dc v ${gray ? 'gray' : ''}">${T(b)}</div>`)}
          <div class="dc n"></div><div class="dc y"><span class="br"></span></div><div class="dc v"></div>
        </div>
        <div class="sb">${UP}<div class="th"></div>${DOWN}</div>
      </div>
      <div class="prompt">提示信息:</div>
      <div class="foot"><div class="btn ok">确定</div><div class="btn">取消</div></div>
      <svg class="ell" viewBox="0 0 550 440"><ellipse cx="245" cy="199" rx="242" ry="18" fill="none" stroke="#f00" stroke-width="3"/></svg>
    </div>`
  }

  private propWin() {
    return html`<div class="prop">
      <div class="proph"><div class="propt">属性编辑器</div><div class="close">x</div></div>
      <div class="pframe">
        <div class="pgrid">
          <div class="dc h"></div><div class="dc h">属性名称</div><div class="dc h hsel">属性值</div>
          ${PROP_ROWS.map(([n, a, b, k]) => html`
            <div class="dc n ${k === 'sel' ? 'no' : ''}"><span class="l">${n}</span></div>
            ${k === 'group'
              ? html`<div class="dc p gray"><span class="bx"></span>${a}</div>`
              : html`<div class="dc ${k === 'sel' ? 'psel' : 'p'} ${k === 'blue' ? 'pblue' : ''}"><span class="pbr ${k === 'end' ? 'end' : ''}"></span>${T(a)}</div>`}
            <div class="dc v ${k === 'sel' ? 'pick' : ''}">${T(b)}</div>`)}
        </div>
        <div class="sb">${UP}<div class="th"></div>${DOWN}</div>
      </div>
      <div class="draw">
        <svg viewBox="941 377 280 130">
          <path d="M1028.500 390.500h94v91h-94z" fill="none" stroke="#fff"/>
          <path d="M1031.500 392.500h87v88h-87z" fill="none" stroke="#0ff" stroke-width="3"/>
          <path d="M1077 383v117M1021 440.500h117" stroke="#fff" stroke-dasharray="10 3 2 3"/>
          <path d="M1132.500 390v92M1127 390.500h10M1127 441h10M1127 481.500h10M1029 487v11M1122.500 487v11M1029 493h95" stroke="#fff"/>
          <g fill="#0ff"><circle cx="1116" cy="395" r="2.500"/><circle cx="1116" cy="425" r="1.500"/><circle cx="1116" cy="451" r="1.500"/><circle cx="1060" cy="478" r="1.500"/><circle cx="1089" cy="478" r="1.500"/><circle cx="1116" cy="478" r="1.500"/><circle cx="1060" cy="393" r="1"/><circle cx="1089" cy="393" r="1"/></g>
          <rect x="1045" y="488" width="19" height="10" fill="#000"/><rect x="1092" y="488" width="19" height="10" fill="#000"/>
          <text class="dt" x="1047" y="497">120</text><text class="dt" x="1094" y="497">120</text>
          <rect x="1127" y="405" width="10" height="18" fill="#000"/><rect x="1127" y="451" width="10" height="18" fill="#000"/>
          <text class="dt" transform="translate(1136 423) rotate(-90)">120</text>
          <text class="dt" transform="translate(1136 469) rotate(-90)">120</text>
        </svg>
      </div>
    </div>`
  }

  private ime() {
    return html`<div class="ime">
      <div class="slogo">S</div>
      <div class="imebar">
        <b>中</b>
        <svg viewBox="0 0 16 16"><circle cx="5" cy="5" r="2" fill="none" stroke="#1a6ab8"/><path d="M11 9c1 1 1 3-1 4" fill="none" stroke="#1a6ab8" stroke-width="2"/></svg>
        <svg viewBox="0 0 16 16"><circle cx="8" cy="8" r="7" fill="none" stroke="#1a6ab8" stroke-width="1.500"/><path d="M5 5v2M11 5v2M4.500 10c2 2.500 5 2.500 7 0" fill="none" stroke="#1a6ab8" stroke-width="1.500"/></svg>
        <svg viewBox="0 0 16 16"><rect x="5" y="0" width="6" height="11" rx="3" fill="#1a6ab8"/><path d="M3 7c0 6 10 6 10 0M8 12v3M5 15.500h6" fill="none" stroke="#1a6ab8" stroke-width="1.500"/></svg>
        <svg viewBox="0 0 16 16"><rect x="0" y="2" width="16" height="12" rx="2" fill="#1a6ab8"/><path d="M2 5h12M2 8h12M4 11h8" stroke="#fff" stroke-dasharray="1.500 1"/></svg>
        <svg viewBox="0 0 16 16"><circle cx="7" cy="4" r="3" fill="#aab4bc"/><path d="M2 15c0-7 10-7 10 0z" fill="#c0c8ce"/><rect x="8" y="8" width="8" height="6" fill="#fff" stroke="#aab4bc"/></svg>
        <svg viewBox="0 0 16 16"><path d="M5 1L1 4l2 3 1-1v9h8V6l1 1 2-3-4-3c-1 2-5 2-6 0z" fill="#1a6ab8"/></svg>
        <svg viewBox="0 0 16 16"><path d="M1 13L8 6c-1-3 2-6 6-5l-3 3 1 2 2 1 2-3c1 4-2 7-5 6l-7 6z" fill="#1a6ab8"/></svg>
      </div>
    </div>`
  }

  private taskbar() {
    return html`<div class="taskbar">
      <div class="start"><svg viewBox="0 0 16 16"><path d="M0 2.500l7-1v6H0zM8 1.300L16 0v7.500H8zM0 8.500h7v6l-7-1zM8 8.500h8V16l-8-1.300z" fill="#fff"/></svg></div>
      <div class="search">
        <svg viewBox="0 0 16 16"><circle cx="8" cy="8" r="6.500" fill="none" stroke="#eee" stroke-width="2"/></svg>
        <span>在这里输入你要搜索的内容</span>
        <svg class="mic" viewBox="0 0 16 18"><rect x="5" y="1" width="6" height="10" rx="3" fill="none" stroke="#999"/><path d="M3 8c0 6 10 6 10 0M8 13v3M5 16.500h6" fill="none" stroke="#999"/></svg>
      </div>
      <div class="tk first"><svg viewBox="0 0 24 24"><path d="M7 3h10v18H7z" fill="none" stroke="#fff" stroke-width="1.300"/><path d="M4 6H2v12h2M20 6h2v12h-2" fill="none" stroke="#fff"/></svg></div>
      <div class="tk pin"><svg viewBox="0 0 24 24"><path d="M11 11C4 12 1 8 3 4c2-3 8-3 8 7zM13 11C12 4 16 1 20 3c3 2 3 8-7 8zM13 13c7-1 10 3 8 7-2 3-8 3-8-7zM11 13c1 7-3 10-7 8-3-2-3-8 7-8z" fill="#dfe6ea"/></svg></div>
      <div class="tk"><svg viewBox="0 0 24 24"><path d="M5 13h14c0-8-10-10-13-3M19 16c-4 6-11 4-13-1 0-2 0-3 1-4" fill="none" stroke="#fff" stroke-width="2.400"/><path d="M4 20c-3-5 8-15 16-17" fill="none" stroke="#ddd"/></svg></div>
      <div class="tk"><svg viewBox="0 0 24 24"><path d="M19 5C12 1 4 6 5 13c1 7 11 9 14 3 1-5-6-7-8-3-1 3 3 4 5 2" fill="none" stroke="#bbb" stroke-width="1.800"/></svg></div>
      <div class="tk"><svg viewBox="0 0 24 24"><path d="M4 13h15c1-6-3-10-8-10-7 0-9 7-8 11 1 6 9 9 15 5v-4c-4 3-9 2-9-2z" fill="#0a78d7"/><path d="M9 10h5c0-3-5-3-5 0z" fill="#040d13"/></svg></div>
      <div class="tk"><svg viewBox="0 0 24 24"><path d="M5 13h14c0-8-11-9-13-2 0 6 8 9 13 5" fill="none" stroke="#2a9ae8" stroke-width="3.500"/><path d="M3 20C1 14 12 3 21 3c2 2 0 6-1 7" fill="none" stroke="#f0c030" stroke-width="1.600"/></svg></div>
      <div class="tk run"><svg viewBox="0 0 24 24"><path d="M2 4h8l2 3h10v14H2z" fill="#f6d776"/><path d="M2 9h20v12H2z" fill="#fbe7a6"/><path d="M8 14h8v7h-3v-3h-2v3H8z" fill="#3aa0e0"/></svg></div>
      <div class="tk run"><svg viewBox="0 0 24 24"><path d="M22 3c-3 2-5 1-8 1C7 4 3 10 4 15c1 5 5 8 9 8 5 0 8-4 8-8 0-5-5-7-8-5-2 1-2 5 1 5" fill="none" stroke="#1a8ce8" stroke-width="4"/></svg></div>
      <div class="tk run"><svg viewBox="0 0 24 24"><circle cx="12" cy="12" r="10" fill="#8cc63f" stroke="#d8f0b0"/><path d="M6 12h12c0-7-11-7-12 0 0 6 8 7 11 3" fill="none" stroke="#fff" stroke-width="2.200"/></svg></div>
      <div class="tk run act"><svg viewBox="0 0 16 16">${ICONS.logo}</svg></div>
      <div class="tray">
        <span class="link">链接</span>
        <div class="cpu">52%<br />CPU使用</div>
        <svg viewBox="0 0 18 18"><path d="M3 12l6-6 6 6" fill="none" stroke="#eee" stroke-width="1.200"/></svg>
        <svg viewBox="0 0 18 18"><rect x="3" y="7" width="13" height="8" fill="#ddd"/><path d="M6 2v5M10 2v5" stroke="#eee" stroke-width="1.500"/></svg>
        <svg viewBox="0 0 18 18"><path d="M3 15a12 12 0 0 1 12-12M6 15a9 9 0 0 1 9-9M9 15a6 6 0 0 1 6-6" fill="none" stroke="#ccc"/><circle cx="13" cy="15" r="1.500" fill="#eee"/></svg>
        <svg viewBox="0 0 18 18"><path d="M2 7h3l4-4v12l-4-4H2z" fill="none" stroke="#eee"/><path d="M12 6c1 2 1 4 0 6M15 4c2 3 2 7 0 10" fill="none" stroke="#ccc"/></svg>
        <svg class="kb" viewBox="0 0 24 16"><rect x=".5" y="1.500" width="23" height="13" fill="none" stroke="#eee"/><path d="M3 5h18M3 8h18M6 11h12" stroke="#eee" stroke-dasharray="1.500 1"/></svg>
        <span class="zh">中</span>
        <div class="sg">S</div>
        <div class="clock">8:22<br />2018/5/23</div>
        <div class="note"><svg viewBox="0 0 18 18"><path d="M2 1h14v12H7l-2 3v-3H2z" fill="#eee"/><path d="M5 4h8M5 7h8M5 10h8" stroke="#222"/></svg><span class="badge">1</span></div>
      </div>
    </div>`
  }

  render() {
    return html`
      <div class="app">
        <div class="title">
          <svg class="lg" viewBox="0 0 16 16">${ICONS.logo}</svg>
          <span class="txt">广联达BIM钢筋算量软件 GGJ2013 - [C:\\Users\\Administrator.PC-20141127NRHM\\Desktop\\白龙村-2018-02-02-19-24-35(2666版).GGJ12]</span>
          <div class="winbtn">
            <svg width="10" height="10" viewBox="0 0 10 10"><path d="M0 5h10" stroke="#888"/></svg>
            <svg width="11" height="11" viewBox="0 0 11 11"><path d="M.5 2.500h8v8h-8zM2.500 2.500v-2h8v8h-2" fill="none" stroke="#888"/></svg>
            <svg width="10" height="10" viewBox="0 0 10 10"><path d="M0 0l10 10M10 0L0 10" stroke="#888"/></svg>
          </div>
        </div>
        <div class="menu">
          ${MENU.map((m) => html`<span>${m}</span>`)}
          <span class="it chg">${I('change')}新建变更</span><span class="dd"></span>
          <span class="it mas">${I('mascot')}广小二</span>
          <div class="right"><span>9</span><span class="dd"></span><span>&nbsp;造价豆:0</span><span>${I('bell')}</span><span class="more" style="margin-left:30px">»</span></div>
        </div>
        <div class="row r1">
          <div class="seg s1a">${renderItems(R1A)}</div>
          <div class="seg s1b">${renderItems(R1B)}</div>
          <div class="seg s1c">${renderItems(R1C)}</div>
          <div class="seg s1d">${renderItems(R1D)}</div>
        </div>
        <div class="body">
          <div class="left">
            <div class="cap">模块导航栏</div>
            <div class="navhead"></div>
            <div class="plus"><svg viewBox="0 0 42 16"><path d="M4 1v7M0 4.500h8" stroke="#111" stroke-width="1.800"/><path d="M11 7v8M7 11h8" stroke="#1a8a7a" stroke-width="1.800"/><path d="M24 5h8" stroke="#111" stroke-width="1.800"/><path d="M30 11h9" stroke="#1a8a7a" stroke-width="1.800"/></svg></div>
            <div class="tree">${this.tree()}</div>
            <div class="navbtn first">单构件输入</div>
            <div class="navbtn">报表预览</div>
          </div>
          <div class="right-col">
            <div class="row tb">${renderItems(R2)}</div>
            <div class="row tb3">
              <div class="cur">编辑钢筋</div>
              <div class="seg seg3a">${renderItems(R3A)}</div>
              <div class="seg3b"></div>
              <div class="seg3c">${renderItems(R3B)}</div>
            </div>
            <div class="row tb4">${renderItems(R4)}</div>
            <div class="canvas">
              <svg viewBox="269 166 1097 306">
                <path d="M640 205L941 216V275L640 272z" fill="#00009c"/>
                <path d="M640 240L941 246V282L640 274z" fill="#000070"/>
                <path d="M640 272L941 285V366L640 344z" fill="#b0b000"/>
                <path d="M680 205h48l1 35h-48z" fill="#0a6ff0"/>
                <path d="M681 240h48l1 27h-48z" fill="#0a55c8"/>
                <path d="M678 270l48 2-1 98-52-2z" fill="#0055a8"/>
                <path d="M665 166l-13 34" stroke="#0a8a0a" fill="none"/>
                <path d="M698.500 350v122" stroke="#f00000" fill="none"/>
              </svg>
            </div>
            <div class="row bar">
              ${renderItems(R5)}
              <span class="it">不偏移</span><span class="dd" style="margin-left:6px"></span>
              <span style="margin-left:1px">X=</span>
              <div class="input">0<svg viewBox="0 0 8 14"><path d="M1 5l3-3 3 3zM1 9l3 3 3-3z" fill="#555"/></svg></div>
              <span>mm</span><span>Y=</span>
            </div>
            <div class="bottom">
              <div class="grip"></div>
              <div class="panel">
                <div class="row rebar">${renderItems(R6)}</div>
                <div class="grid">
                  <div class="g h"></div>
                  ${BAR_COLS.map((c, i) => html`<div class="g h ${i === 1 ? 'hsel' : ''} ${i === 13 ? 'clip' : ''}">${T(c)}</div>`)}

                  <div class="g n no"><span class="l">1*</span></div>
                  <div class="g gr">${T('全部纵筋.1')}</div>
                  <div class="g gr dia black"><span class="l">12</span></div>
                  <div class="g gr ctr"><u>Φ</u></div>
                  <div class="g gr"><span class="l">18</span></div>
                  <div class="g gr">${FIG1}</div>
                  <div class="g gr">${T('800-240+480+40*d')}</div>
                  <div class="g gr wrap"><div>${T('柱实际高度-节点高+锚固+锚固')}</div></div>
                  <div class="g gr"><span class="l">1520</span></div>
                  <div class="g gr"><span class="l">4</span></div>
                  <div class="g gr"><span class="l">0</span></div>
                  <div class="g gr"><span class="l">0</span></div>
                  <div class="g gr"><span class="l">1.35</span></div>
                  <div class="g gr"><span class="l">5.399</span></div>
                  <div class="g gr">直筋</div>

                  <div class="g n"><span class="l">2</span></div>
                  <div class="g gr">${T('箍筋.1')}</div>
                  <div class="g gr black"><span class="l">8</span></div>
                  <div class="g gr ctr"><u>Φ</u></div>
                  <div class="g gr"><span class="l">195</span></div>
                  <div class="g gr">${FIG2}</div>
                  <div class="g gr wrap"><div><span class="l">2*((240-2*25)+(240-2*25))+<br />2*(11.9*d)</span></div></div>
                  <div class="g gr"></div>
                  <div class="g gr"><span class="l">950</span></div>
                  <div class="g gr"><span class="l">8</span></div>
                  <div class="g gr"><span class="l">0</span></div>
                  <div class="g gr"><span class="l">0</span></div>
                  <div class="g gr"><span class="l">0.375</span></div>
                  <div class="g gr"><span class="l">3.002</span></div>
                  <div class="g gr">箍筋</div>

                  <div class="g n"><span class="l">3</span></div>
                  <div class="g"></div><div class="g black"></div><div class="g"></div><div class="g"></div><div class="g"></div><div class="g"></div><div class="g"></div><div class="g"></div><div class="g"></div><div class="g"></div><div class="g"></div><div class="g"></div><div class="g"></div><div class="g"></div>
                </div>
                <div class="hscroll"><span class="arr">‹</span><div class="th"></div><span class="sp"></span><span class="arr">›</span></div>
              </div>
            </div>
          </div>
        </div>
        <div class="status">
          <div style="width:148px"><span class="l">X=33667 Y=93</span></div>
          <div style="width:78px">${T('层高:2.8m')}</div>
          <div style="width:98px">${T('底标高:20.35m')}</div>
          <div style="width:48px"><span class="l">1(1)</span></div>
          <div style="width:914px">在此设置构造柱的计算规则</div>
          <div style="width:70px"><span class="l">786 FPS</span></div>
        </div>
        ${this.taskbar()}
      </div>
      ${this.dialog()}
      ${this.propWin()}
      ${this.ime()}
      <div class="medal">61</div>
    `
  }
}
